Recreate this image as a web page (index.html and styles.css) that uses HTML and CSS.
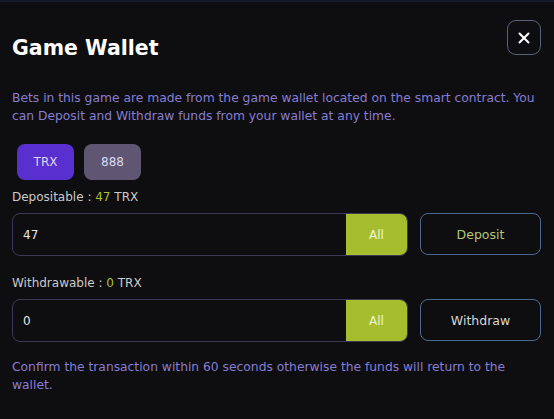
FILE: index.html
```html
<!DOCTYPE html>
<html lang="en">
<head>
  <meta charset="UTF-8">
  <meta name="viewport" content="width=device-width, initial-scale=1.0">
  <title>Game Wallet</title>
  <link rel="stylesheet" href="styles.css">
</head>
<body>

  <div class="wallet">
    <div class="wallet-header">
      <h2 class="wallet-title">Game Wallet</h2>
      <button class="close-btn" aria-label="Close">
        <svg width="12" height="12" viewBox="0 0 12 12">
          <path d="M1.5 1.5 L10.5 10.5 M10.5 1.5 L1.5 10.5" stroke="#ffffff" stroke-width="2" stroke-linecap="round"/>
        </svg>
      </button>
    </div>

    <p class="note">Bets in this game are made from the game wallet located on the smart contract. You can Deposit and Withdraw funds from your wallet at any time.</p>

    <div class="tokens">
      <button class="token active">TRX</button>
      <button class="token">888</button>
    </div>

    <div class="label">Depositable : <span class="amount">47</span> TRX</div>
    <div class="row">
      <div class="field">
        <input type="text" value="47">
        <button class="all-btn">All</button>
      </div>
      <button class="action deposit">Deposit</button>
    </div>

    <div class="label label-second">Withdrawable : <span class="amount">0</span> TRX</div>
    <div class="row">
      <div class="field">
        <input type="text" value="0">
        <button class="all-btn">All</button>
      </div>
      <button class="action">Withdraw</button>
    </div>

    <p class="note note-bottom">Confirm the transaction within 60 seconds otherwise the funds will return to the wallet.</p>
  </div>

</body>
</html>
```

FILE: styles.css
```css
* {
  box-sizing: border-box;
}

body {
  margin: 0;
  font-family: "DejaVu Sans", sans-serif;
  background-color: #0e0e10;
  border-top: 2px solid #141a28;
  height: 419px;
  overflow: hidden;
}

.wallet {
  padding: 18px 13px 0 12px;
}

.wallet-header {
  display: flex;
  justify-content: space-between;
  align-items: flex-start;
}

.wallet-title {
  margin: 14px 0 0;
  font-size: 20.5px;
  line-height: 28px;
  font-weight: bold;
  color: #ffffff;
}

.close-btn {
  width: 34px;
  height: 35px;
  display: flex;
  align-items: center;
  justify-content: center;
  background: #0e0e12;
  border: 1.5px solid #58607a;
  border-radius: 9px;
  padding: 0;
  cursor: pointer;
}

.note {
  margin: 27px 0 0;
  font-size: 12.3px;
  line-height: 18px;
  color: #877dd2;
}

.note-bottom {
  margin-top: 16px;
  padding-right: 12px;
}

.tokens {
  display: flex;
  gap: 10px;
  margin: 19px 0 0 5px;
}

.token {
  width: 57px;
  height: 36px;
  border: none;
  border-radius: 8px;
  background-color: #5e5672;
  color: #ddd8f0;
  font-family: inherit;
  font-size: 12px;
  cursor: pointer;
}

.token.active {
  background-color: #5a2fd0;
}

.label {
  margin-top: 9px;
  font-size: 12px;
  line-height: 16px;
  color: #cacaca;
}

.label-second {
  margin-top: 19px;
}

.amount {
  color: #a8bf34;
}

.row {
  display: flex;
  gap: 12px;
  margin-top: 8px;
}

.field {
  flex: 1;
  display: flex;
  height: 43px;
  border: 1px solid #3b3956;
  border-radius: 8px;
  overflow: hidden;
}

.field input {
  flex: 1;
  min-width: 0;
  background: transparent;
  border: none;
  outline: none;
  padding: 0 10px;
  color: #e6e6e6;
  font-family: inherit;
  font-size: 12px;
}

.all-btn {
  width: 61px;
  border: none;
  background-color: #a6be2d;
  color: #eef4d0;
  font-family: inherit;
  font-size: 12px;
  cursor: pointer;
}

.action {
  width: 121px;
  height: 42px;
  background: transparent;
  border: 1px solid #4c6890;
  border-radius: 8px;
  color: #d6d6d6;
  font-family: inherit;
  font-size: 12.5px;
  cursor: pointer;
}

.action.deposit {
  color: #b5c579;
}
```
